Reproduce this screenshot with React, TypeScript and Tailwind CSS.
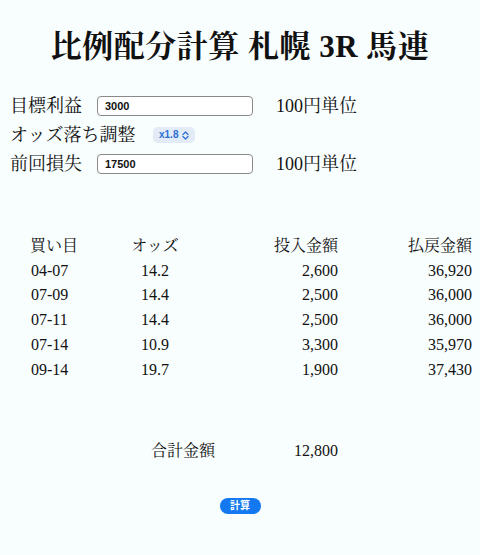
import { useState } from "react"

type Row = {
    kaime: string
    odds: string
    bet: string
    payout: string
}

const rows: Row[] = [
    { kaime: "04-07", odds: "14.2", bet: "2,600", payout: "36,920" },
    { kaime: "07-09", odds: "14.4", bet: "2,500", payout: "36,000" },
    { kaime: "07-11", odds: "14.4", bet: "2,500", payout: "36,000" },
    { kaime: "07-14", odds: "10.9", bet: "3,300", payout: "35,970" },
    { kaime: "09-14", odds: "19.7", bet: "1,900", payout: "37,430" },
]

const serif = "font-['Liberation_Serif','Noto_Serif_CJK_JP','Noto_Sans_CJK_JP',serif]"
const ui = "font-['Liberation_Sans','Noto_Sans_CJK_JP',sans-serif]"

const cols = "grid grid-cols-[80px_90px_138px_134px]"

export default function App() {
    const [target, setTarget] = useState("3000")
    const [loss, setLoss] = useState("17500")

    return (
        <div className={`w-[480px] h-[555px] bg-[#f8fdfd] text-[#111] ${serif}`}>
            <h1 className="pt-[27px] text-center text-[31px] font-bold leading-[40px] tracking-[0.5px]">
                比例配分計算 札幌 3R 馬連
            </h1>

            <div className="mt-[28px] pl-[10px] flex flex-col gap-[7px] text-[18px] leading-[22px]">
                <div className="flex items-center h-[22px]">
                    <span className="w-[87px]">目標利益</span>
                    <input
                        value={target}
                        onChange={(e) => setTarget(e.target.value)}
                        className={`w-[156px] h-[20px] px-[7px] rounded-[4px] border border-[#8a8a8a] bg-white text-[11px] font-bold outline-none ${ui}`}
                    />
                    <span className="ml-[23px]">100円単位</span>
                </div>
                <div className="flex items-center h-[22px]">
                    <span className="w-[143px]">オッズ落ち調整</span>
                    <button className={`h-[16px] px-[6px] flex items-center gap-[4px] rounded-[5px] bg-[#e2ebf6] text-[#2c6fd4] text-[10px] font-bold ${ui}`}>
                        x1.8
                        <svg width="7" height="9" viewBox="0 0 7 9" fill="none" stroke="currentColor" strokeWidth="1.2" strokeLinecap="round" strokeLinejoin="round">
                            <path d="M1 3.5 L3.5 1 L6 3.5" />
                            <path d="M1 5.5 L3.5 8 L6 5.5" />
                        </svg>
                    </button>
                </div>
                <div className="flex items-center h-[22px]">
                    <span className="w-[87px]">前回損失</span>
                    <input
                        value={loss}
                        onChange={(e) => setLoss(e.target.value)}
                        className={`w-[156px] h-[20px] px-[7px] rounded-[4px] border border-[#8a8a8a] bg-white text-[11px] font-bold outline-none ${ui}`}
                    />
                    <span className="ml-[23px]">100円単位</span>
                </div>
            </div>

            <div className="mt-[59px] pl-[30px] text-[16px] leading-[24.7px]">
                <div className={cols}>
                    <span>買い目</span>
                    <span className="text-center">オッズ</span>
                    <span className="text-right">投入金額</span>
                    <span className="text-right">払戻金額</span>
                </div>
                {rows.map((r) => (
                    <div key={r.kaime} className={cols}>
                        <span className="pl-[1px]">{r.kaime}</span>
                        <span className="text-center">{r.odds}</span>
                        <span className="text-right">{r.bet}</span>
                        <span className="text-right">{r.payout}</span>
                    </div>
                ))}

                <div className="mt-[57px] grid grid-cols-[121px_187px]">
                    <span className="col-start-2 flex justify-between">
                        <span>合計金額</span>
                        <span>12,800</span>
                    </span>
                </div>
            </div>

            <div className="mt-[34px] flex justify-center">
                <button className={`h-[16px] w-[41px] rounded-full bg-[#1479f0] text-white text-[10px] font-bold leading-[16px] ${ui}`}>
                    計算
                </button>
            </div>
        </div>
    )
}
